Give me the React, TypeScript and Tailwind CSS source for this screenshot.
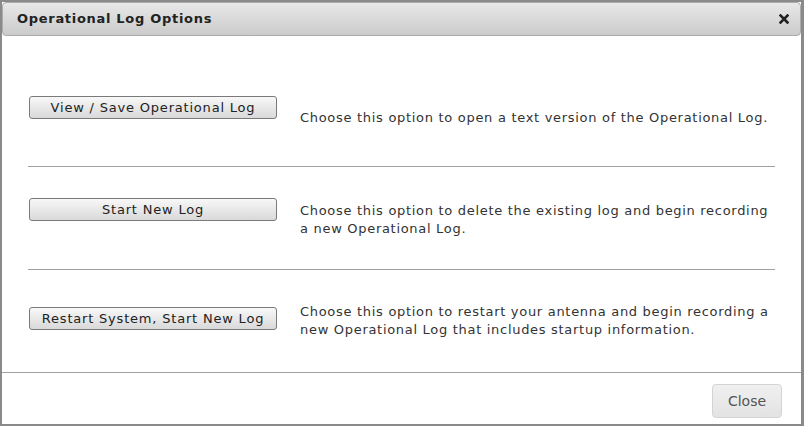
import React from "react";

const font = { fontFamily: '"DejaVu Sans", Verdana, sans-serif' };

function OptButton({ label }: { label: string }) {
  return (
    <button
      className="ml-[1px] w-[248px] h-[23px] shrink-0 border border-[#7a7a7a] rounded-[3px] bg-gradient-to-b from-[#f8f8f8] to-[#d9d9d9] text-[13px] tracking-[0.8px] text-[#222] leading-none"
      style={font}
    >
      {label}
    </button>
  );
}

export default function App() {
  return (
    <div
      className="w-[804px] h-[426px] bg-white border-2 border-r-[3px] border-[#8a8a8a] flex flex-col"
      style={font}
    >
      <div className="h-[34px] shrink-0 border border-[#ababab] rounded-[4px] bg-gradient-to-b from-[#e8e8e8] to-[#cbcbcb] flex items-center justify-between pl-[14px] pr-[10px]">
        <span className="text-[13px] font-bold tracking-[0.7px] text-[#222]">Operational Log Options</span>
        <svg width="10" height="10" viewBox="0 0 10 10" className="mr-[1px]">
          <path d="M1.5 1.5 L8.5 8.5 M8.5 1.5 L1.5 8.5" stroke="#222" strokeWidth="2.6" strokeLinecap="square" />
        </svg>
      </div>
      <div className="flex-1 flex flex-col px-[26px]">
        <div className="h-[131px] flex items-start pt-[60px] border-b border-[#a0a0a0]">
          <OptButton label="View / Save Operational Log" />
          <p className="flex-1 ml-[23px] mt-[13px] text-[13px] tracking-[0.7px] leading-[18px] text-[#333]">
            Choose this option to open a text version of the Operational Log.
          </p>
        </div>
        <div className="h-[103px] flex items-start pt-[31px] border-b border-[#a0a0a0]">
          <OptButton label="Start New Log" />
          <p className="flex-1 ml-[23px] mt-[4px] text-[13px] tracking-[0.7px] leading-[18px] text-[#333]">
            Choose this option to delete the existing log and begin recording a new Operational Log.
          </p>
        </div>
        <div className="flex-1 flex items-start pt-[31px]">
          <div className="mt-[5px]">
            <OptButton label="Restart System, Start New Log" />
          </div>
          <p className="flex-1 ml-[23px] mt-[2px] text-[13px] tracking-[0.7px] leading-[18px] text-[#333]">
            Choose this option to restart your antenna and begin recording a new Operational Log that includes startup information.
          </p>
        </div>
      </div>
      <div className="h-[52px] shrink-0 border-t border-[#a0a0a0] flex items-start justify-end pr-[19px] pt-[11px]">
        <button className="w-[70px] h-[34px] border border-[#d3d3d3] rounded-[4px] bg-gradient-to-b from-[#f0f0f0] to-[#e3e3e3] text-[14px] text-[#555]" style={font}>
          Close
        </button>
      </div>
    </div>
  );
}
